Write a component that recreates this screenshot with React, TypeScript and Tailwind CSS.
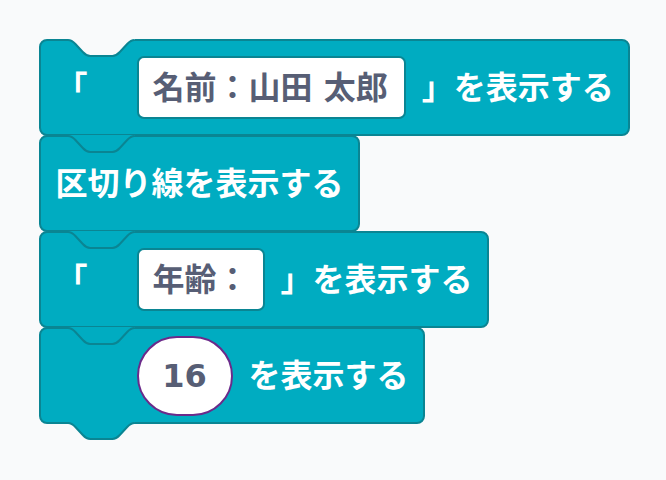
import clsx from "clsx";
import type { ReactNode } from "react";

// notch curve, scratch style, scaled up
const CURVE =
  "M0,1 c3.7,0 5.55,2 7.4,4 l7.4,8 c1.85,2 3.7,4 7.4,4 h22.2 c3.7,0 5.55,-2 7.4,-4 l7.4,-8 c1.85,-2 3.7,-4 7.4,-4";
const FILL = "M0,0 L" + CURVE.slice(1) + " L66.6,0 Z";

function Notch({ fill, className }: { fill: string; className: string }) {
  return (
    <svg className={className} width="67" height="19" viewBox="0 0 67 19" overflow="visible">
      <path d={FILL} fill={fill} />
      <path d={CURVE} fill="none" stroke="#0a8593" strokeWidth="2" />
    </svg>
  );
}

function Block({
  first,
  last,
  children,
}: {
  first?: boolean;
  last?: boolean;
  children: ReactNode;
}) {
  return (
    <div
      className={clsx(
        "relative flex h-[97px] items-center rounded-[8px] border-2 border-[#0a8593] bg-[#00acc1] px-[14.5px]",
        !first && "-mt-[1px]"
      )}
    >
      <Notch
        fill={first ? "#f9fafb" : "#00acc1"}
        className="absolute -top-[2px] left-[27px]"
      />
      {children}
      {last && <Notch fill="#00acc1" className="absolute top-full left-[27px]" />}
    </div>
  );
}

function Field({ children }: { children: ReactNode }) {
  return (
    <div className="flex h-[63px] items-center rounded-[7px] border-2 border-[#0a8593] bg-white px-[14px] text-[#575e75]">
      {children}
    </div>
  );
}

export default function App() {
  return (
    <div className="flex min-h-screen flex-col items-start bg-[#f9fafb] pl-[39px] pt-[39px] font-['DejaVu_Sans','Noto_Sans_CJK_JP',sans-serif] text-[32px] font-bold leading-none whitespace-nowrap text-white">
      <Block first>
        <span className="w-[81px] shrink-0">「</span>
        <Field>
          <span className="pr-[2px]">名前：山田 太郎</span>
        </Field>
        <span className="ml-[16px]">」を表示する</span>
      </Block>

      <Block>
        <span>区切り線を表示する</span>
      </Block>

      <Block>
        <span className="w-[81px] shrink-0">「</span>
        <Field>年齢：</Field>
        <span className="ml-[16px]">」を表示する</span>
      </Block>

      <Block last>
        <span className="w-[81px] shrink-0" />
        <div className="flex h-[80px] w-[96px] items-center justify-center rounded-full border-2 border-[#6b2a8a] bg-white text-[#575e75]">
          16
        </div>
        <span className="ml-[16px]">を表示する</span>
      </Block>
    </div>
  );
}
